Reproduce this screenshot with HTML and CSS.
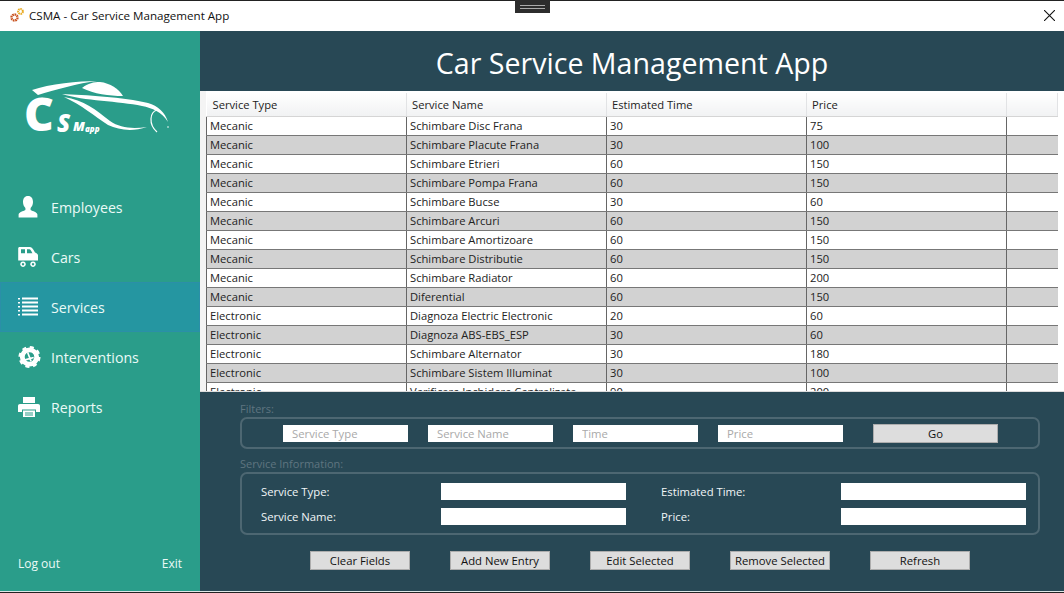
FILE: index.html
```html
<!DOCTYPE html>
<html lang="en">
<head>
    <meta charset="UTF-8">
    <title>CSMA - Car Service Management App</title>
    <link rel="stylesheet" href="styles.css">
</head>
<body>
    <div class="window">
        <div class="titlebar">
            <svg class="app-icon" viewBox="0 0 16 16" width="16" height="16">
                <circle cx="5.5" cy="10.5" r="3" fill="none" stroke="#c8501c" stroke-width="2.4" stroke-dasharray="1.6 0.7"/>
                <circle cx="11.5" cy="4.5" r="2.4" fill="none" stroke="#e8a91f" stroke-width="2" stroke-dasharray="1.4 0.6"/>
            </svg>
            <span class="app-title">CSMA - Car Service Management App</span>
            <svg class="close-icon" viewBox="0 0 10 10" width="11" height="11">
                <path d="M0 0L10 10M10 0L0 10" stroke="#111" stroke-width="1" fill="none"/>
            </svg>
            <div class="grip"><span></span></div>
        </div>

        <div class="main">
            <aside class="sidebar">
                <div class="logo">
                    <svg viewBox="0 0 150 56" width="150" height="56">
                        <path fill="#fff" d="M8 10C25 4 55 1 73 1C55 3 30 10 14 15Z"/>
                        <path fill="#fff" d="M58 8C64 3 70 2 76 2C86 3 95 9 99 16C85 16 70 14 58 8Z"/>
                        <path fill="#fff" d="M38 14C60 15 100 17 124 23C134 26 141 32 144 42C138 32 128 28 118 26C95 21 60 21 38 14Z"/>
                        <path fill="#fff" d="M40 17C60 20 72 30 86 41C96 48 108 49 123 47C108 52 95 50 84 45C70 36 58 25 40 17Z"/>
                        <path fill="none" stroke="#fff" stroke-width="1.2" d="M133 30C126 32 124 44 133 52"/>
                        <circle cx="144" cy="47" r="0.8" fill="#fff"/>
                    </svg>
                    <span class="logo-c">C</span>
                    <span class="logo-s">S</span>
                    <span class="logo-m">M</span>
                    <span class="logo-app">app</span>
                </div>

                <nav class="menu">
                    <a class="menu-item">
                        <svg viewBox="0 0 20 22" width="20" height="22"><path fill="#fff" d="M10 0C6.6 0 5 2.6 5 6C5 8.6 6 10.6 7.4 12V14C5 15.4 1.2 16 0.6 18.4V21.4H19.4V18.4C18.8 16 15 15.4 12.6 14V12C14 10.6 15 8.6 15 6C15 2.6 13.4 0 10 0Z"/></svg>
                        <span>Employees</span>
                    </a>
                    <a class="menu-item">
                        <svg viewBox="0 0 20 20" width="20" height="20"><path fill="#fff" fill-rule="evenodd" d="M1 0H12C14 0 15.6 3 17 5.4C18.6 6 20 7 20 8.4V13.6H0.2V1ZM3 2.2V6.2H7V2.2ZM9 2.2V6.2H14.4C13.4 4.4 12.4 2.2 11.4 2.2Z"/><path fill="none" stroke="#fff" stroke-width="1.6" d="M5 15.2a2 2 0 1 0 .01 0M15 15.2a2 2 0 1 0 .01 0"/></svg>
                        <span>Cars</span>
                    </a>
                    <a class="menu-item active">
                        <svg viewBox="0 0 20 20" width="20" height="20"><path fill="#fff" d="M0 1H2V2.6H0ZM4 0.6H20V2.6H4ZM0 5H2V6.6H0ZM4 4.6H20V6.6H4ZM0 9H2V10.6H0ZM4 8.6H20V10.6H4ZM0 13H2V14.6H0ZM4 12.6H20V14.6H4ZM0 17H2V18.6H0ZM4 16.6H20V18.6H4Z"/></svg>
                        <span>Services</span>
                    </a>
                    <a class="menu-item">
                        <svg viewBox="0 0 24 24" width="23" height="23"><circle cx="12" cy="12" r="7.5" fill="none" stroke="#fff" stroke-width="5"/><circle cx="12" cy="12" r="9.8" fill="none" stroke="#fff" stroke-width="3.4" stroke-dasharray="4 3.7"/><path fill="none" stroke="#fff" stroke-width="1.8" d="M10 7L13.6 16.5M7.4 15L16.4 12.5"/></svg>
                        <span>Interventions</span>
                    </a>
                    <a class="menu-item">
                        <svg viewBox="0 0 22 20" width="22" height="20"><path fill="#fff" fill-rule="evenodd" d="M5 0H17V6H5ZM2 7H20C21.2 7 22 7.8 22 9V15H18V12.6H4V15H0V9C0 7.8 0.8 7 2 7ZM5 13.6H17V20H5ZM7 15.4V16.4H15V15.4ZM7 17.4V18.4H15V17.4Z"/></svg>
                        <span>Reports</span>
                    </a>
                </nav>

                <div class="sidebar-bottom">
                    <span>Log out</span>
                    <span>Exit</span>
                </div>
            </aside>

            <section class="content">
                <header class="page-header">Car Service Management App</header>

                <div class="table-area">
                    <table class="services">
                        <colgroup>
                            <col class="col-main"><col class="col-main"><col class="col-main"><col class="col-main"><col class="col-rest">
                        </colgroup>
                        <thead>
                            <tr><th>Service Type</th><th>Service Name</th><th>Estimated Time</th><th>Price</th><th></th></tr>
                        </thead>
                        <tbody>
                            <tr><td>Mecanic</td><td>Schimbare Disc Frana</td><td>30</td><td>75</td><td></td></tr>
                            <tr><td>Mecanic</td><td>Schimbare Placute Frana</td><td>30</td><td>100</td><td></td></tr>
                            <tr><td>Mecanic</td><td>Schimbare Etrieri</td><td>60</td><td>150</td><td></td></tr>
                            <tr><td>Mecanic</td><td>Schimbare Pompa Frana</td><td>60</td><td>150</td><td></td></tr>
                            <tr><td>Mecanic</td><td>Schimbare Bucse</td><td>30</td><td>60</td><td></td></tr>
                            <tr><td>Mecanic</td><td>Schimbare Arcuri</td><td>60</td><td>150</td><td></td></tr>
                            <tr><td>Mecanic</td><td>Schimbare Amortizoare</td><td>60</td><td>150</td><td></td></tr>
                            <tr><td>Mecanic</td><td>Schimbare Distributie</td><td>60</td><td>150</td><td></td></tr>
                            <tr><td>Mecanic</td><td>Schimbare Radiator</td><td>60</td><td>200</td><td></td></tr>
                            <tr><td>Mecanic</td><td>Diferential</td><td>60</td><td>150</td><td></td></tr>
                            <tr><td>Electronic</td><td>Diagnoza Electric Electronic</td><td>20</td><td>60</td><td></td></tr>
                            <tr><td>Electronic</td><td>Diagnoza ABS-EBS_ESP</td><td>30</td><td>60</td><td></td></tr>
                            <tr><td>Electronic</td><td>Schimbare Alternator</td><td>30</td><td>180</td><td></td></tr>
                            <tr><td>Electronic</td><td>Schimbare Sistem Illuminat</td><td>30</td><td>100</td><td></td></tr>
                            <tr><td>Electronic</td><td>Verificare Inchidere Centralizata</td><td>90</td><td>200</td><td></td></tr>
                        </tbody>
                    </table>
                </div>

                <div class="panel">
                    <div class="group-label">Filters:</div>
                    <div class="group filters">
                        <input class="filter-input" placeholder="Service Type">
                        <input class="filter-input" placeholder="Service Name">
                        <input class="filter-input" placeholder="Time">
                        <input class="filter-input" placeholder="Price">
                        <button class="btn btn-go">Go</button>
                    </div>

                    <div class="group-label">Service Information:</div>
                    <div class="group info">
                        <label>Service Type:</label><input class="info-input">
                        <label>Estimated Time:</label><input class="info-input">
                        <label>Service Name:</label><input class="info-input">
                        <label>Price:</label><input class="info-input">
                    </div>

                    <div class="actions">
                        <button class="btn">Clear Fields</button>
                        <button class="btn">Add New Entry</button>
                        <button class="btn">Edit Selected</button>
                        <button class="btn">Remove Selected</button>
                        <button class="btn">Refresh</button>
                    </div>
                </div>
            </section>
        </div>
    </div>
</body>
</html>
```

FILE: styles.css
```css
* {
    box-sizing: border-box;
}
html, body {
    margin: 0;
    height: 100%;
    overflow: hidden;
}
body {
    font-family: "Open Sans", "Noto Sans", sans-serif;
    background: #222;
}
.window {
    height: 593px;
    display: flex;
    flex-direction: column;
    border-top: 1px solid #222;
    border-bottom: 1px solid #222;
}

/* title bar */
.titlebar {
    height: 30px;
    flex: none;
    position: relative;
    display: flex;
    align-items: center;
    background: #fff;
    padding: 0 9px 2px 9px;
    font-size: 11.6px;
    color: #111;
}
.app-icon {
    margin-right: 4px;
}
.app-title {
    flex: 1;
}
.grip {
    position: absolute;
    left: 515px;
    top: -1px;
    width: 35px;
    height: 13px;
    background: #2d2d2d;
    display: flex;
    align-items: center;
    justify-content: center;
}
.grip span {
    width: 25px;
    height: 4px;
    border-top: 1px solid #aaa;
    border-bottom: 1px solid #aaa;
}

.main {
    flex: 1;
    display: flex;
    min-height: 0;
    border-bottom: 1px solid #dfe8e8;
}

/* sidebar */
.sidebar {
    width: 200px;
    flex: none;
    display: flex;
    flex-direction: column;
    background: #2a9d8a;
    color: #fff;
}
.logo {
    position: relative;
    height: 151px;
    padding: 49px 0 0 24px;
}
.logo svg {
    display: block;
}
.logo span {
    position: absolute;
    color: #fff;
    font-weight: 800;
    line-height: 1;
}
.logo-c {
    left: 24px;
    top: 59px;
    font-size: 46px;
}
.logo-s {
    left: 57px;
    top: 80px;
    font-size: 24px;
    font-style: italic;
}
.logo-m {
    left: 73px;
    top: 89px;
    font-size: 13px;
    font-style: italic;
}
.logo-app {
    left: 85px;
    top: 94px;
    font-size: 8px;
    font-style: italic;
}
.menu-item {
    height: 50px;
    display: flex;
    align-items: center;
    position: relative;
    padding-left: 51px;
    font-size: 14.2px;
    color: #eafaf7;
}
.menu-item svg {
    position: absolute;
    left: 18px;
    top: 50%;
    transform: translateY(-50%);
}
.menu-item.active {
    background: #2596a1;
    border: 1px solid #2b8fa8;
    padding-left: 50px;
}
.menu-item.active svg {
    left: 17px;
}
.sidebar-bottom {
    margin-top: auto;
    display: flex;
    justify-content: space-between;
    padding: 0 18px 19px;
    font-size: 12px;
    color: #eafaf7;
}

/* right side */
.content {
    flex: 1;
    display: flex;
    flex-direction: column;
    min-width: 0;
    background: #284855;
}
.page-header {
    height: 60px;
    flex: none;
    display: flex;
    align-items: center;
    justify-content: center;
    color: #fff;
    font-size: 28.6px;
    padding-top: 2px;
}
.table-area {
    height: 300px;
    flex: none;
    overflow: hidden;
    background: #fff;
    padding: 2px 7px 0 0;
    border-left: 6px solid #f4f4f4;
}
.services {
    table-layout: fixed;
    border-collapse: collapse;
    width: 851px;
    font-size: 11.2px;
    color: #222;
}
.col-main {
    width: 200px;
}
.col-rest {
    width: 51px;
}
.services th {
    height: 23px;
    font-weight: 400;
    text-align: left;
    padding: 0 0 0 5px;
    background: linear-gradient(#fff, #f1f2f3);
    border-right: 1px solid #e2e3e5;
    border-bottom: 1px solid #d5d5d5;
}
.services th:first-child {
    padding-left: 6px;
}
.services td {
    height: 19px;
    padding: 0 0 0 3px;
    border-left: 1px solid #666;
    border-bottom: 1px solid #777;
    white-space: nowrap;
    overflow: hidden;
}
.services tbody tr:nth-child(even) td {
    background: #d2d2d2;
}

/* filters and form */
.panel {
    flex: 1;
    padding: 10px 24px 0 40px;
    border-top: 1px solid #dcdcdc;
}
.group-label {
    font-size: 11px;
    line-height: 14px;
    color: #5f7580;
}
.group {
    border: 2px solid #4d6772;
    border-radius: 7px;
}
.filters {
    height: 32px;
    margin: 1px 0 8px;
    display: flex;
    align-items: center;
    padding-left: 41px;
    gap: 20px;
}
.filter-input {
    width: 125px;
    height: 17px;
    border: 0;
    padding: 0 0 0 9px;
    font: 11.3px "Open Sans", "Noto Sans", sans-serif;
    background: #fff;
}
.filter-input::placeholder {
    color: #a9a9a9;
}
.btn {
    width: 100px;
    height: 19px;
    padding: 0;
    border: 1px solid #adadad;
    background: #dddddd;
    color: #111;
    font: 11.3px "Open Sans", "Noto Sans", sans-serif;
}
.btn-go {
    width: 125px;
    margin-left: 10px;
}
.info {
    height: 63px;
    margin-top: 1px;
    display: grid;
    grid-template-columns: 180px 185px 35px 180px 185px;
    grid-template-rows: 17px 17px;
    row-gap: 8px;
    align-content: center;
    padding-left: 19px;
}
.info label {
    font-size: 11.3px;
    color: #f2f6f7;
    line-height: 17px;
}
.info label:nth-of-type(even) {
    grid-column: 4;
}
.info-input {
    height: 17px;
    border: 0;
    background: #fff;
}
.actions {
    display: flex;
    gap: 40px;
    margin: 16px 0 0 70px;
}
```
